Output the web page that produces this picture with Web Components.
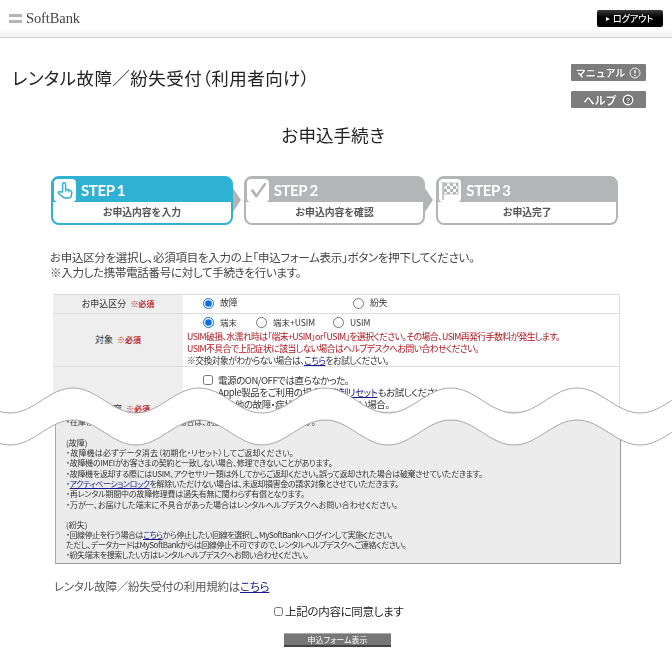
<!DOCTYPE html>
<html lang="ja">
<head>
<meta charset="utf-8">
<title>レンタル故障／紛失受付</title>
<style>
  html, body { margin: 0; background: #fff; }
  body { font-family: "Noto Sans CJK JP", "Liberation Sans", sans-serif; font-feature-settings: "palt"; color: #333; }
  a { color: #1a1a8c; text-decoration: underline; }
  .red { color: #b5121b; }
  .tight { letter-spacing: -.55px; }
</style>
</head>
<body>
<rental-page>
  <site-header></site-header>

  <title-bar>
    レンタル故障／紛失受付（利用者向け）
    <side-button slot="actions" icon="info">マニュアル</side-button>
    <side-button slot="actions" icon="help">ヘルプ</side-button>
  </title-bar>

  <page-heading>お申込手続き</page-heading>

  <step-bar>
    <step-card num="1" icon="hand" active>お申込内容を入力</step-card>
    <step-card num="2" icon="check">お申込内容を確認</step-card>
    <step-card num="3" icon="flag">お申込完了</step-card>
  </step-bar>

  <intro-text>
    お申込区分を選択し、必須項目を入力の上「申込フォーム表示」ボタンを押下してください。<br>
    ※入力した携帯電話番号に対して手続きを行います。
  </intro-text>

  <form-table>
    <form-row label="お申込区分" height="19">
      <div style="display:flex;padding-left:16px">
        <radio-option name="kubun" checked style="width:150px">故障</radio-option>
        <radio-option name="kubun">紛失</radio-option>
      </div>
    </form-row>
    <form-row label="対象" height="53">
      <div style="display:flex;padding-left:16px;height:17px;font-size:8.5px">
        <radio-option name="taisho" checked style="width:53px">端末</radio-option>
        <radio-option name="taisho" style="width:77px">端末+USIM</radio-option>
        <radio-option name="taisho">USIM</radio-option>
      </div>
      <div class="red tight">USIM破損、水濡れ時は「端末+USIM」or「USIM」を選択ください。その場合、USIM再発行手数料が発生します。</div>
      <div class="red tight">USIM不具合で上記症状に該当しない場合はヘルプデスクへお問い合わせください。</div>
      <div class="tight">※交換対象がわからない場合は、<a href="#">こちら</a>をお試しください。</div>
    </form-row>
    <form-row label="故障内容" height="48" label-pos="bottom">
      <check-option>電源のON/OFFでは直らなかった。<br>Apple製品をご利用の場合は<a href="#">強制リセット</a>もお試しください。<br>その他の故障・症状、左記に該当しない場合。</check-option>
      <div style="height:6px;margin:1px 0 0 140px;background:#ececec"></div>
    </form-row>
  </form-table>

  <notice-box>
    <div style="margin-bottom:10.5px">・在庫がない場合や故障のあった場合は、別途ご案内させていただきます。</div>
    <div>(故障)</div>
    <div style="letter-spacing:.2px">・故障機は必ずデータ消去（初期化・リセット）してご返却ください。</div>
    <div style="letter-spacing:-.3px">・故障機のIMEIがお客さまの契約と一致しない場合、修理できないことがあります。</div>
    <div style="letter-spacing:-.3px">・故障機を返却する際にはUSIM、アクセサリー類は外してからご返却ください。誤って返却された場合は破棄させていただきます。</div>
    <div style="letter-spacing:-.4px">・<a href="#">アクティベーションロック</a>を解除いただけない場合は、未返却損害金の請求対象とさせていただきます。</div>
    <div style="letter-spacing:-.2px">・再レンタル期間中の故障修理費は過失有無に関わらず有償となります。</div>
    <div>・万が一、お届けした端末に不具合があった場合はレンタルヘルプデスクへお問い合わせください。</div>
    <div style="margin-top:9.7px">(紛失)</div>
    <div style="letter-spacing:-.45px">・回線停止を行う場合は<a href="#">こちら</a>から停止したい回線を選択し、MySoftBankへログインして実施ください。</div>
    <div style="letter-spacing:-.45px">ただし、データカードはMySoftBankからは回線停止不可ですので、レンタルヘルプデスクへご連絡ください。</div>
    <div style="letter-spacing:-.45px">・紛失端末を捜索したい方はレンタルヘルプデスクへお問い合わせください。</div>
  </notice-box>

  <agree-block></agree-block>

  <wave-break></wave-break>
</rental-page>

<script>
class RentalPage extends HTMLElement {
  constructor() {
    super();
    this.attachShadow({ mode: 'open' }).innerHTML = `
      <style>
        :host { display: block; position: relative; width: 672px; height: 656px; overflow: hidden; filter: blur(.3px); }
      </style>
      <slot></slot>`;
  }
}

class SiteHeader extends HTMLElement {
  constructor() {
    super();
    this.attachShadow({ mode: 'open' }).innerHTML = `
      <style>
        :host { display: flex; align-items: center; justify-content: space-between; height: 38px; box-sizing: border-box; padding: 0 9px 0 9px;
          border-bottom: 1px solid #cfcfd6; background: linear-gradient(#fff 28px, #f1f1f3); }
        .logo { display: flex; align-items: center; gap: 4px; }
        .bars { width: 13px; height: 9px; border-top: 3px solid #b5b5b5; border-bottom: 3px solid #b5b5b5; box-sizing: border-box; }
        .name { font: 14.5px "Liberation Serif", serif; color: #444; letter-spacing: -.1px; }
        .logout { display: flex; align-items: center; gap: 3px; width: 66px; height: 17px; box-sizing: border-box; padding-left: 9px; border-radius: 2px;
          background: linear-gradient(#3a3a3a, #000 45%); color: #fff; font-size: 9px; font-weight: 500; }
        .logout i { border-left: 4px solid #fff; border-top: 2.5px solid transparent; border-bottom: 2.5px solid transparent; }
      </style>
      <div class="logo"><span class="bars"></span><span class="name">SoftBank</span></div>
      <div class="logout"><i></i>ログアウト</div>`;
  }
}

class TitleBar extends HTMLElement {
  constructor() {
    super();
    this.attachShadow({ mode: 'open' }).innerHTML = `
      <style>
        :host { display: flex; justify-content: space-between; padding: 26px 26px 0 12px; height: 70px; box-sizing: border-box; }
        h1 { margin: 2px 0 0; font-size: 17.5px; letter-spacing: .45px; line-height: 24px; font-weight: 400; color: #222; }
        .actions { display: flex; flex-direction: column; gap: 10px; }
      </style>
      <h1><slot></slot></h1>
      <div class="actions"><slot name="actions"></slot></div>`;
  }
}

class SideButton extends HTMLElement {
  constructor() {
    super();
    const help = this.getAttribute('icon') === 'help';
    const icon = help
      ? `<svg width="12" height="12" viewBox="0 0 12 12"><circle cx="6" cy="6" r="5.4" fill="#fff"/><circle cx="6" cy="6" r="4" fill="#666"/><text x="6" y="8.6" text-anchor="middle" font-size="7.5" font-weight="700" fill="#fff" font-family="Liberation Sans">?</text></svg>`
      : `<svg width="12" height="12" viewBox="0 0 12 12"><circle cx="6" cy="6" r="5" fill="none" stroke="#eee" stroke-width="1"/><path d="M6 3v3.6" stroke="#eee" stroke-width="1.5"/><circle cx="6" cy="8.6" r=".8" fill="#eee"/></svg>`;
    this.attachShadow({ mode: 'open' }).innerHTML = `
      <style>
        :host { display: flex; align-items: center; justify-content: center; gap: ${help ? 5 : 4}px; width: 75px; height: 17px; border-radius: 1px;
          background: #7d7d7d; color: #fff; font-size: ${help ? 11 : 10}px; font-weight: 700; font-feature-settings: normal; text-shadow: 0 0 1px #333; }
        svg { display: block; }
      </style>
      <slot></slot>${icon}`;
  }
}

class PageHeading extends HTMLElement {
  constructor() {
    super();
    this.attachShadow({ mode: 'open' }).innerHTML = `
      <style>
        :host { display: block; text-align: center; font-size: 17.5px; line-height: 26px; height: 26px; margin-top: 14px; padding-right: 5px; color: #222; font-feature-settings: normal; }
      </style>
      <slot></slot>`;
  }
}

class StepBar extends HTMLElement {
  constructor() {
    super();
    this.attachShadow({ mode: 'open' }).innerHTML = `
      <style>
        :host { display: flex; margin: 28px 54px 0 51px; gap: 11px; }
        ::slotted(*) { flex: 1; }
      </style>
      <slot></slot>`;
  }
}

const STEP_ICONS = {
  hand: `<path d="M8.6 13V5.2a1.5 1.5 0 0 1 3 0v5l4.2 1c1.4.4 2 1.2 2 2.4l-.5 3.2c-.3 1.4-1.2 2.2-2.6 2.2h-3.6c-1 0-1.8-.5-2.4-1.3L4.6 14.5c-.9-1.3.7-2.6 1.9-1.5z" fill="#fff" stroke="#2fb1d3" stroke-width="1.5" stroke-linejoin="round"/><path d="M11.6 10v3M14.3 11v2.5" stroke="#2fb1d3" stroke-width="1"/>`,
  check: `<path d="M3.5 11.5l2.5-1.5 3.5 5 8-11.5 2 1.5-9.5 13.5h-1.5z" fill="#b3b5b6"/>`,
  flag: `<path d="M4 3v18" stroke="#b3b5b6" stroke-width="1.5"/><rect x="5" y="4" width="14" height="11" fill="#fff" stroke="#b3b5b6" stroke-width=".8"/><path d="M5 4h3v3H5zM11 4h3v3h-3zM17 4h2v3h-2zM8 7h3v3H8zM14 7h3v3h-3zM5 10h3v3H5zM11 10h3v3h-3zM17 10h2v3h-2zM8 13h3v2H8zM14 13h3v2h-3z" fill="#b3b5b6"/>`
};

class StepCard extends HTMLElement {
  constructor() {
    super();
    const color = this.hasAttribute('active') ? '#2fb1d3' : '#b3b5b6';
    const arrow = this.getAttribute('num') !== '3';
    this.attachShadow({ mode: 'open' }).innerHTML = `
      <style>
        :host { display: block; position: relative; height: 49px; box-sizing: border-box; border: 2px solid ${color}; border-radius: 8px; background: #fff; }
        .top { display: flex; align-items: center; gap: 5px; height: 24px; background: ${color}; border-radius: 5px 5px 0 0; padding-left: 1px; }
        .icon { width: 22px; height: 23px; background: #fff; border-radius: 4px; }
        svg { display: block; }
        .step { font: 700 15px Lato, sans-serif; color: #fff; letter-spacing: -.4px; word-spacing: -.5px; }
        .label { text-align: center; font-size: 9.8px; font-weight: 700; line-height: 20px; color: #555; font-feature-settings: normal; }
        .arrow { position: absolute; left: 100%; top: 10px; margin-left: 2px; border-left: 8px solid #b3b5b6; border-top: 12px solid transparent; border-bottom: 12px solid transparent; }
      </style>
      <div class="top">
        <div class="icon"><svg width="22" height="23" viewBox="0 0 22 23">${STEP_ICONS[this.getAttribute('icon')]}</svg></div>
        <span class="step">STEP ${this.getAttribute('num')}</span>
      </div>
      <div class="label"><slot></slot></div>
      ${arrow ? '<div class="arrow"></div>' : ''}`;
  }
}

class IntroText extends HTMLElement {
  constructor() {
    super();
    this.attachShadow({ mode: 'open' }).innerHTML = `
      <style>
        :host { display: block; margin: 25px 0 0 50px; font-size: 11.5px; letter-spacing: -.3px; line-height: 15px; color: #444; }
      </style>
      <slot></slot>`;
  }
}

class FormTable extends HTMLElement {
  constructor() {
    super();
    this.attachShadow({ mode: 'open' }).innerHTML = `
      <style>
        :host { display: block; margin: 14px 52px 0 53px; border-top: 1px solid #ddd; border-right: 1px solid #ddd; }
      </style>
      <slot></slot>`;
  }
}

class FormRow extends HTMLElement {
  constructor() {
    super();
    const bottom = this.getAttribute('label-pos') === 'bottom';
    this.attachShadow({ mode: 'open' }).innerHTML = `
      <style>
        :host { display: grid; grid-template-columns: 130px 1fr; height: ${this.getAttribute('height')}px; box-sizing: border-box; border-bottom: ${bottom ? 0 : '1px solid #ddd'}; font-size: 8.8px; line-height: 12px; color: #333; }
        .label { display: flex; align-items: ${bottom ? 'flex-end' : 'center'}; justify-content: center; gap: 4px; background: #eee; font-size: 9px; }
        .req { color: #c0232b; font-size: 8px; font-weight: 700; }
        .cell { padding-left: 4px; overflow: hidden; }
      </style>
      <div class="label">${this.getAttribute('label')}<span class="req">※必須</span></div>
      <div class="cell"><slot></slot></div>`;
  }
}

class RadioOption extends HTMLElement {
  constructor() {
    super();
    const checked = this.hasAttribute('checked') ? 'checked' : '';
    this.attachShadow({ mode: 'open' }).innerHTML = `
      <style>
        :host { display: flex; align-items: center; gap: 6px; height: 16px; box-sizing: border-box; }
        input { width: 11px; height: 11px; margin: 0; accent-color: #0a6fe0; }
      </style>
      <input type="radio" name="${this.getAttribute('name')}" ${checked}><span><slot></slot></span>`;
  }
}

class CheckOption extends HTMLElement {
  constructor() {
    super();
    this.attachShadow({ mode: 'open' }).innerHTML = `
      <style>
        :host { display: flex; gap: 5px; padding: 7px 0 0 16px; font-size: 9.5px; letter-spacing: -.45px; line-height: 12px; }
        input { width: 10px; height: 10px; margin: 1px 0 0; flex: none; }
      </style>
      <input type="checkbox"><span><slot></slot></span>`;
  }
}

class NoticeBox extends HTMLElement {
  constructor() {
    super();
    this.attachShadow({ mode: 'open' }).innerHTML = `
      <style>
        :host { display: block; margin: -1px 51px 0 55px; height: 150px; box-sizing: border-box; padding: 2px 0 0 10px; background: #ececec;
          border: 1px solid #aaa; border-right-color: #999; border-bottom-color: #999; font-size: 8px; line-height: 10.3px; color: #333; }
      </style>
      <slot></slot>`;
  }
}

class AgreeBlock extends HTMLElement {
  constructor() {
    super();
    this.attachShadow({ mode: 'open' }).innerHTML = `
      <style>
        :host { display: block; }
        a { color: #1a1a8c; }
        .terms { margin: 14px 0 0 54px; font-size: 11.5px; letter-spacing: -.25px; line-height: 16px; color: #555; }
        .agree { display: flex; align-items: center; gap: 2px; margin: 9px 0 0 274px; font-size: 11.5px; letter-spacing: -.3px; line-height: 16px; color: #222; }
        input { width: 9px; height: 9px; margin: 0; }
        .submit { width: 107px; height: 14px; margin: 14px 0 0 284px; box-sizing: border-box; background: #777; border-top: 1px solid #aaa; border-bottom: 2px solid #444; color: #fff; font-size: 8px; line-height: 11px; text-align: center; }
      </style>
      <div class="terms">レンタル故障／紛失受付の利用規約は<a href="#">こちら</a></div>
      <label class="agree"><input type="checkbox">上記の内容に同意します</label>
      <div class="submit">申込フォーム表示</div>`;
  }
}

class WaveBreak extends HTMLElement {
  constructor() {
    super();
    // half periods of 63px, first one starts on a crest at x = -53
    const HALF = 63, COUNT = 13, RISE = 25, START = -53;
    const forward = (top) => {
      let d = '';
      for (let i = 0; i < COUNT; i++) {
        const x = START + i * HALF;
        const y0 = i % 2 ? top + RISE : top;
        const y1 = i % 2 ? top : top + RISE;
        d += ` C${x + 24} ${y0} ${x + 39} ${y1} ${x + HALF} ${y1}`;
      }
      return d;
    };
    const backward = (top) => {
      let d = '';
      for (let i = COUNT - 1; i >= 0; i--) {
        const x = START + (i + 1) * HALF;
        const y0 = i % 2 ? top : top + RISE;
        const y1 = i % 2 ? top + RISE : top;
        d += ` C${x - 24} ${y0} ${x - 39} ${y1} ${x - HALF} ${y1}`;
      }
      return d;
    };
    const UPPER = 388, LOWER = 420;
    const endX = START + COUNT * HALF;
    this.attachShadow({ mode: 'open' }).innerHTML = `
      <style>
        :host { position: absolute; inset: 0; pointer-events: none; }
        svg { display: block; }
      </style>
      <svg width="672" height="656" viewBox="0 0 672 656">
        <path d="M${START} ${UPPER}${forward(UPPER)} L${endX} ${LOWER + RISE}${backward(LOWER)} Z" fill="#fff"/>
        <path d="M${START} ${UPPER}${forward(UPPER)}" fill="none" stroke="#a5a5a5"/>
        <path d="M${START} ${LOWER}${forward(LOWER)}" fill="none" stroke="#a5a5a5"/>
      </svg>`;
  }
}

customElements.define('rental-page', RentalPage);
customElements.define('site-header', SiteHeader);
customElements.define('title-bar', TitleBar);
customElements.define('side-button', SideButton);
customElements.define('page-heading', PageHeading);
customElements.define('step-bar', StepBar);
customElements.define('step-card', StepCard);
customElements.define('intro-text', IntroText);
customElements.define('form-table', FormTable);
customElements.define('form-row', FormRow);
customElements.define('radio-option', RadioOption);
customElements.define('check-option', CheckOption);
customElements.define('notice-box', NoticeBox);
customElements.define('agree-block', AgreeBlock);
customElements.define('wave-break', WaveBreak);
</script>
</body>
</html>
